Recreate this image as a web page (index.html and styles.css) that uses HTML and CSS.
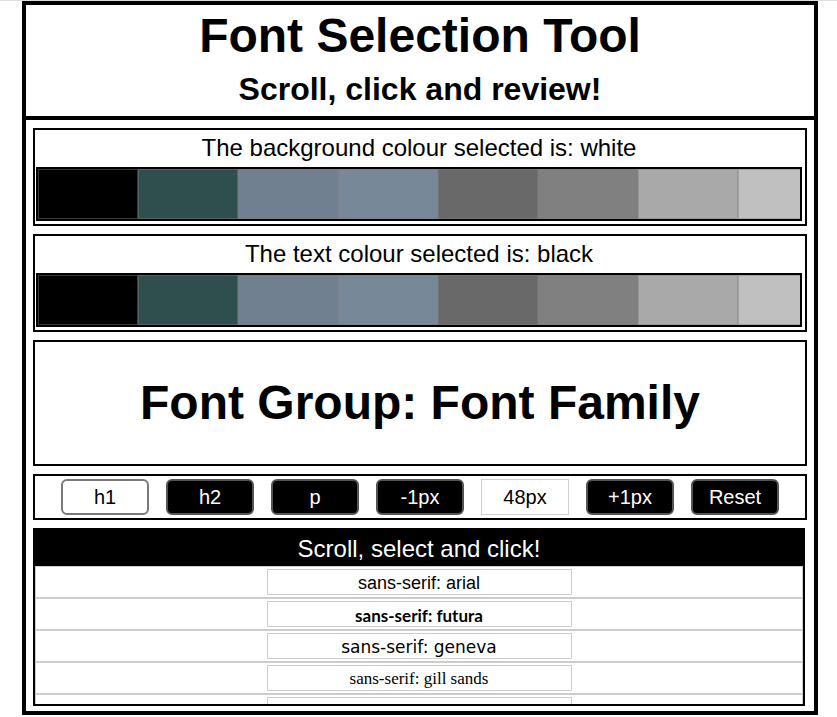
FILE: index.html
```html
<!DOCTYPE html>
<html lang="en">
<head>
<meta charset="utf-8">
<title>Font Selection Tool</title>
<link rel="stylesheet" href="styles.css">
</head>
<body>
<div class="app">
  <header class="head">
    <h1 class="title">Font Selection Tool</h1>
    <h2 class="subtitle">Scroll, click and review!</h2>
  </header>
  <main class="content">
    <section class="panel colour-panel">
      <p class="panel-title">The background colour selected is: white</p>
      <div class="strip">
        <div class="swatch sw-black"></div>
        <div class="swatch sw-dslate"></div>
        <div class="swatch sw-slate"></div>
        <div class="swatch sw-lslate"></div>
        <div class="swatch sw-dim"></div>
        <div class="swatch sw-gray"></div>
        <div class="swatch sw-dgray"></div>
        <div class="swatch sw-silver"></div>
      </div>
    </section>
    <section class="panel colour-panel">
      <p class="panel-title">The text colour selected is: black</p>
      <div class="strip">
        <div class="swatch sw-black"></div>
        <div class="swatch sw-dslate"></div>
        <div class="swatch sw-slate"></div>
        <div class="swatch sw-lslate"></div>
        <div class="swatch sw-dim"></div>
        <div class="swatch sw-gray"></div>
        <div class="swatch sw-dgray"></div>
        <div class="swatch sw-silver"></div>
      </div>
    </section>
    <section class="panel preview">
      <h1 class="preview-text">Font Group: Font Family</h1>
    </section>
    <section class="panel controls">
      <button class="btn btn-active">h1</button>
      <button class="btn">h2</button>
      <button class="btn">p</button>
      <button class="btn">-1px</button>
      <div class="size-box">48px</div>
      <button class="btn">+1px</button>
      <button class="btn">Reset</button>
    </section>
    <section class="panel list">
      <div class="list-head">Scroll, select and click!</div>
      <ul class="font-list">
        <li class="row"><span class="row-box f-arial">sans-serif: arial</span></li>
        <li class="row"><span class="row-box f-futura">sans-serif: futura</span></li>
        <li class="row"><span class="row-box f-geneva">sans-serif: geneva</span></li>
        <li class="row"><span class="row-box f-gill">sans-serif: gill sands</span></li>
        <li class="row"><span class="row-box"></span></li>
      </ul>
    </section>
  </main>
</div>
</body>
</html>
```
FILE: styles.css
```css
html, body {
  margin: 0;
  padding: 0;
  background: #fff;
}

body {
  border-top: 1px solid #dedede;
  font-family: "Liberation Sans", Arial, Helvetica, sans-serif;
  color: #000;
}

.app {
  margin-left: 22px;
  width: 796px;
  height: 714px;
  box-sizing: border-box;
  border: 4px solid #000;
  display: flex;
  flex-direction: column;
}

.head {
  border-bottom: 4px solid #000;
  padding: 3px 0 7px;
  text-align: center;
  flex: none;
}

.title {
  margin: 0;
  font-size: 48px;
  line-height: 56px;
  font-weight: bold;
}

.subtitle {
  margin: 5px 0 0;
  font-size: 32px;
  line-height: 40px;
  font-weight: bold;
}

.content {
  flex: 1;
  min-height: 0;
  padding: 8px 7px 0;
  display: flex;
  flex-direction: column;
  gap: 8px;
  overflow: hidden;
}

.panel {
  border: 2px solid #000;
  box-sizing: border-box;
  flex: none;
}

.colour-panel {
  height: 98px;
  padding: 0 3px 3px 1px;
}

.panel-title {
  margin: 4px 0 5px;
  font-size: 24px;
  line-height: 28px;
  text-align: center;
}

.strip {
  height: 54px;
  box-sizing: border-box;
  border: 2px solid #000;
  display: flex;
  overflow: hidden;
}

.swatch {
  flex: 0 0 100px;
  height: 50px;
  box-sizing: border-box;
  border: 1px solid rgba(128, 128, 128, 0.45);
}

.sw-black { background: #000; }
.sw-dslate { background: #2f4f4f; }
.sw-slate { background: #708090; }
.sw-lslate { background: #778899; }
.sw-dim { background: #696969; }
.sw-gray { background: #808080; }
.sw-dgray { background: #a9a9a9; }
.sw-silver { background: #c0c0c0; }

.preview {
  height: 126px;
  display: flex;
  align-items: center;
  justify-content: center;
}

.preview-text {
  margin: 0;
  font-size: 48px;
  line-height: 56px;
  font-weight: bold;
}

.controls {
  height: 46px;
  display: flex;
  align-items: center;
  justify-content: center;
  gap: 17px;
}

.btn {
  width: 88px;
  height: 36px;
  box-sizing: border-box;
  padding: 0;
  border: 2px solid #545454;
  border-radius: 6px;
  background: #000;
  color: #fff;
  font-family: "Liberation Sans", Arial, Helvetica, sans-serif;
  font-size: 20px;
  line-height: 30px;
}

.btn-active {
  background: #fff;
  color: #000;
  border-color: #7a7a7a;
}

.size-box {
  width: 88px;
  height: 36px;
  box-sizing: border-box;
  border: 1px solid #cfcfcf;
  display: flex;
  align-items: center;
  justify-content: center;
  font-size: 20px;
}

.list {
  height: 178px;
  margin-right: 2px;
  display: flex;
  flex-direction: column;
  overflow: hidden;
}

.list-head {
  flex: none;
  height: 36px;
  line-height: 37px;
  background: #000;
  color: #fff;
  font-size: 24px;
  text-align: center;
}

.font-list {
  margin: 0;
  padding: 0;
  list-style: none;
}

.row {
  height: 30px;
  border: 1px solid #cdcdcd;
  display: flex;
  align-items: center;
  justify-content: center;
}

.row-box {
  width: 305px;
  height: 26px;
  box-sizing: border-box;
  border: 1px solid #cdcdcd;
  padding-top: 2px;
  display: flex;
  align-items: center;
  justify-content: center;
  font-size: 18px;
}

.f-arial { font-family: "Liberation Sans", Arial, sans-serif; }
.f-futura { font-family: Lato, "Noto Sans", sans-serif; font-weight: bold; font-size: 17px; }
.f-geneva { font-family: "DejaVu Sans", Verdana, sans-serif; font-size: 17px; }
.f-gill { font-family: "Liberation Serif", "Times New Roman", serif; font-size: 17px; }
```
